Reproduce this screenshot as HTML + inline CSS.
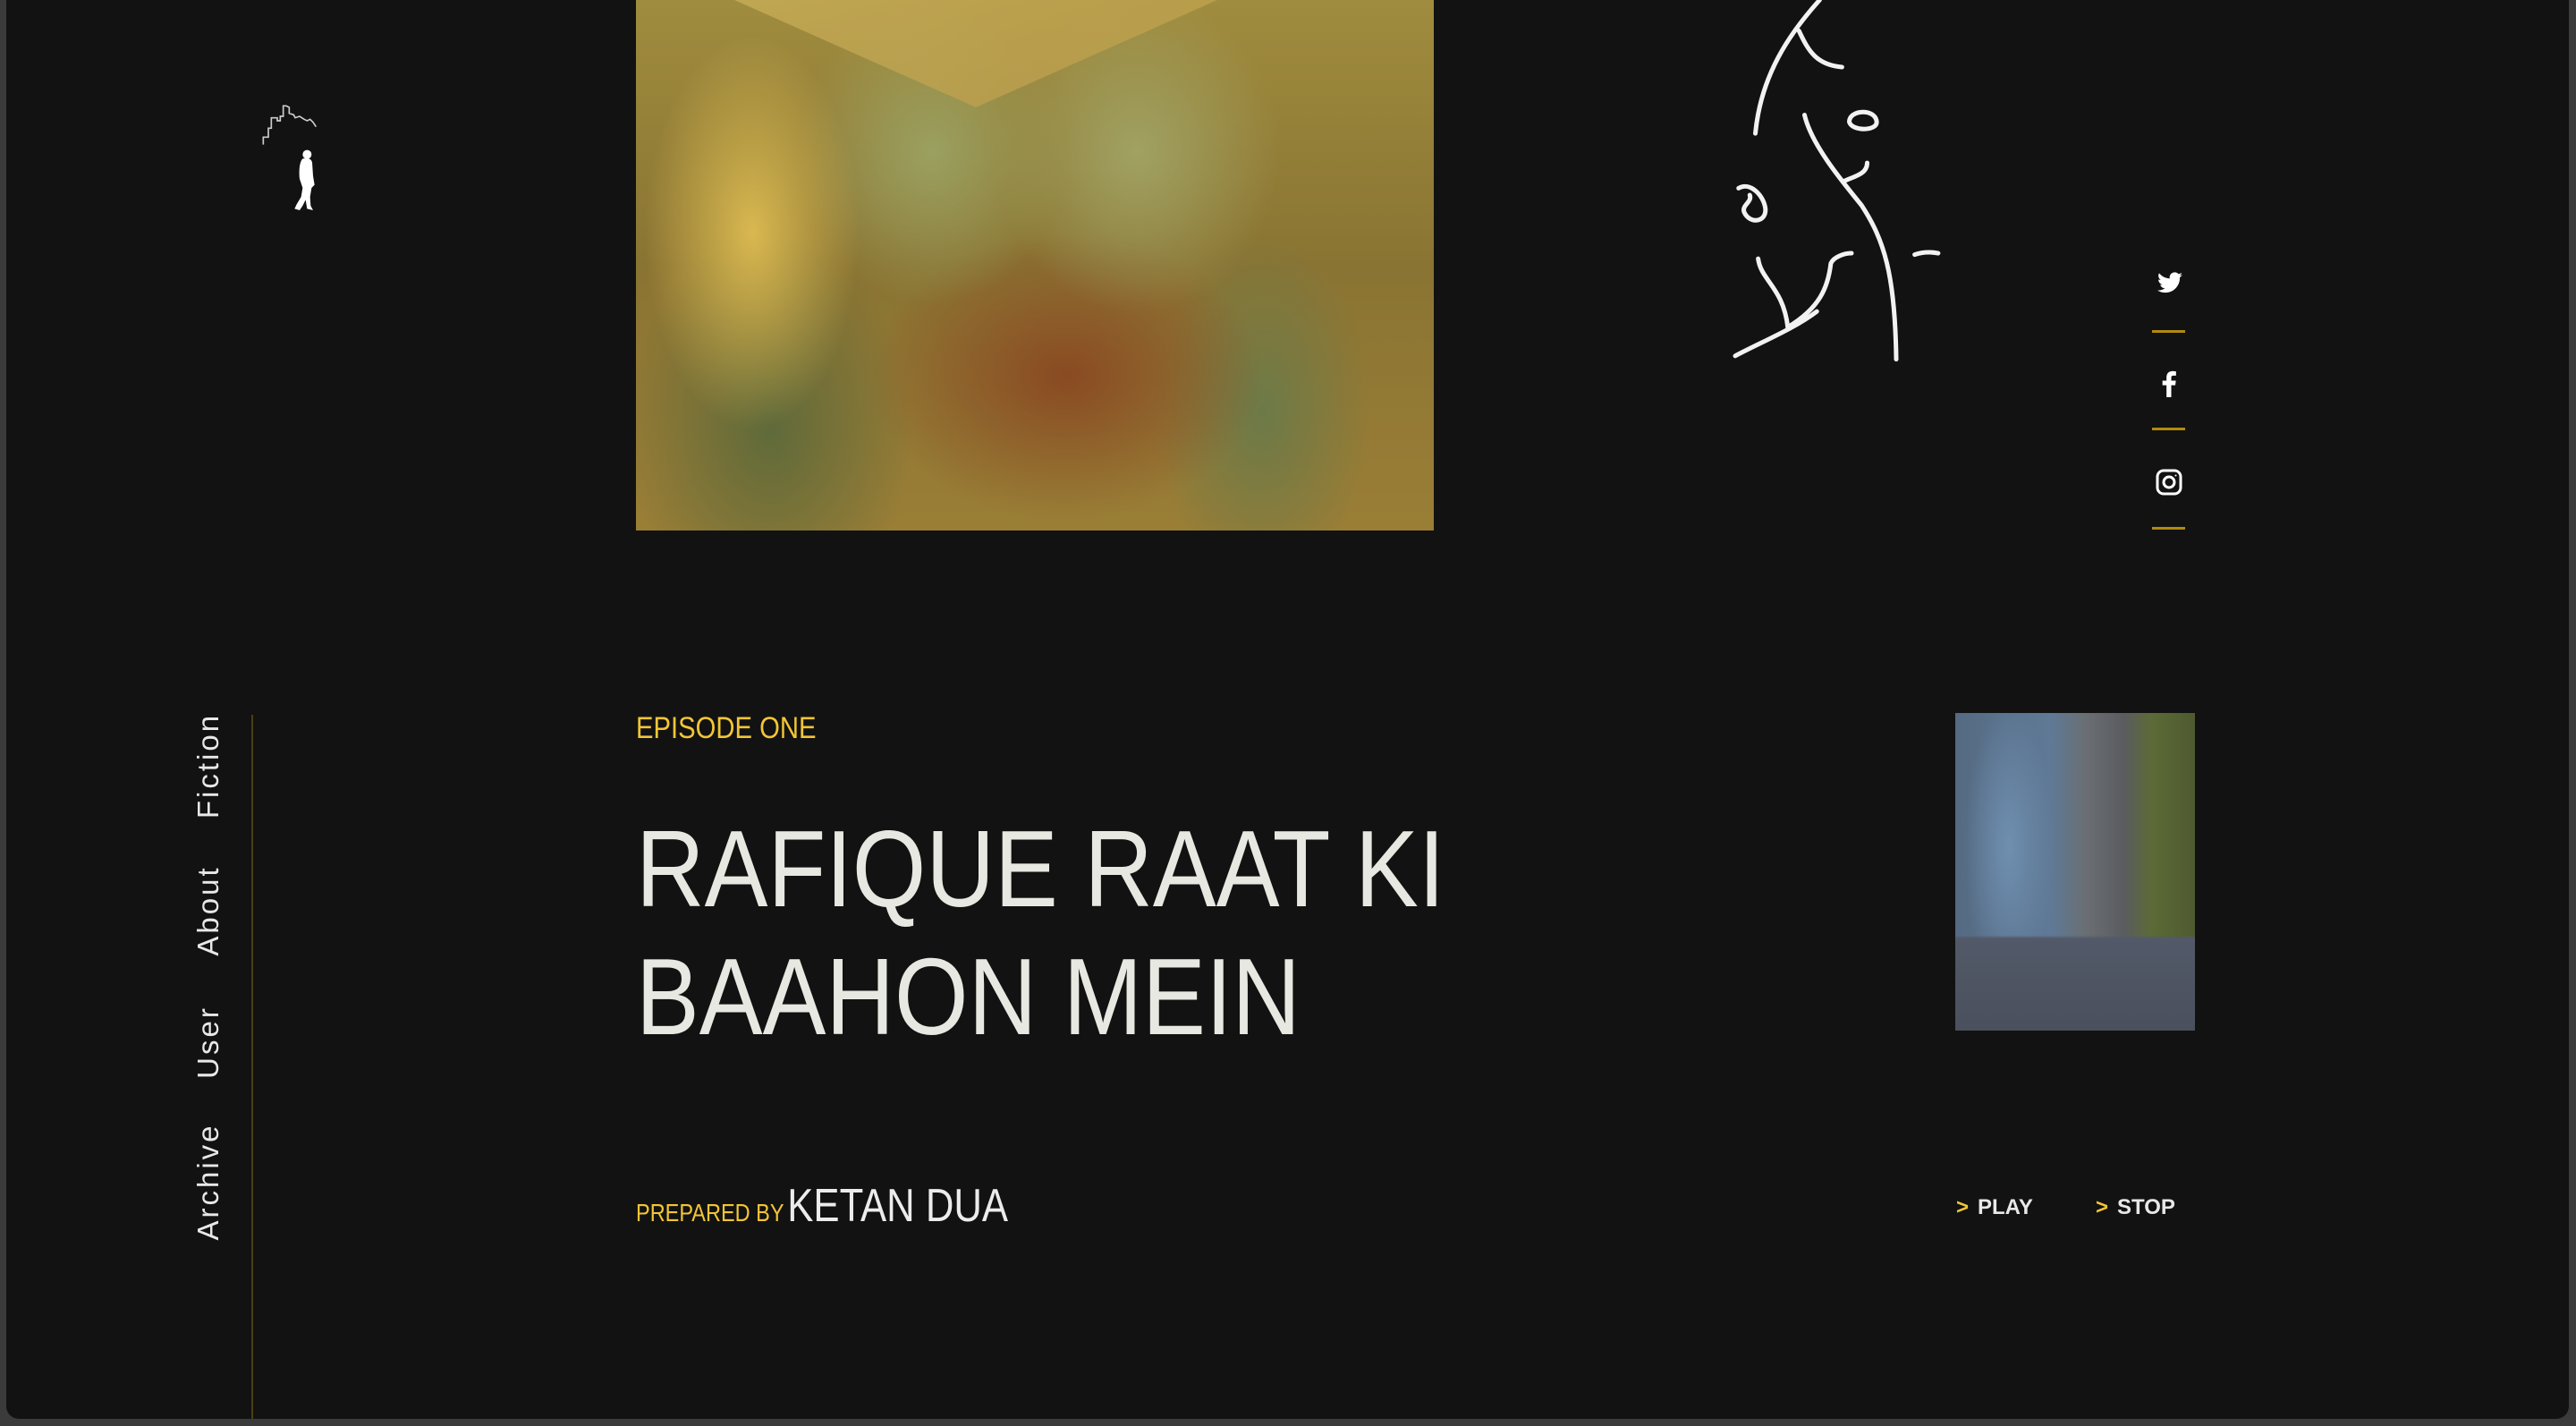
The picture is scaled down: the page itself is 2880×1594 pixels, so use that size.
<!DOCTYPE html>
<html><head><meta charset="utf-8"><style>
html,body{margin:0;padding:0;}
body{width:2880px;height:1594px;background:#3b3b3b;position:relative;overflow:hidden;font-family:"Liberation Sans",sans-serif;}
.win{position:absolute;left:7px;top:0;width:2865px;height:1586px;background:#121212;border-radius:0 0 14px 14px;overflow:hidden;}
.a{position:absolute;}
.main{left:704px;top:0;width:892px;height:593px;background:
radial-gradient(ellipse 120px 220px at 130px 260px,#d9b850 0%,rgba(217,184,80,0) 100%),
radial-gradient(ellipse 150px 170px at 330px 170px,#9aa060 0%,rgba(154,160,96,0) 100%),
radial-gradient(ellipse 160px 180px at 560px 170px,#a0a263 0%,rgba(160,162,99,0) 100%),
radial-gradient(ellipse 220px 160px at 480px 420px,#8a4a22 0%,rgba(138,74,34,0) 100%),
radial-gradient(ellipse 120px 200px at 700px 460px,#6c7a48 0%,rgba(108,122,72,0) 100%),
radial-gradient(ellipse 160px 220px at 150px 480px,#5f6a3a 0%,rgba(95,106,58,0) 100%),
linear-gradient(180deg,#a08c3e 0%,#8a7433 50%,#9a7e36 100%);}
.roof{left:110px;top:0;width:540px;height:120px;background:linear-gradient(160deg,#c7ad58,#b89a48);clip-path:polygon(0 0,100% 0,50% 100%);opacity:.8}
.thumb{left:2179px;top:797px;width:268px;height:355px;background:
linear-gradient(180deg,rgba(0,0,0,0) 0%,rgba(0,0,0,0) 70%,#525968 71%,#4a505c 100%),
radial-gradient(ellipse 50px 160px at 60px 150px,#6f8fb0 0%,rgba(111,143,176,0) 100%),
linear-gradient(90deg,#556a82 0%,#5f7996 40%,#6a6e72 55%,#5a5c60 70%,#5c6a36 82%,#4e5a30 100%);}
.nav{left:226px;color:#e8e8e8;font-size:33px;letter-spacing:3px;transform:translate(-50%,-50%) rotate(-90deg);white-space:nowrap;}
.vline{left:274px;top:799px;width:2px;height:800px;background:#4a3f12;}
.sl{left:2399px;width:37px;height:3px;background:#b08a10;}
.ep{left:704px;top:795px;color:#f2c536;font-size:34px;transform:scaleX(.86);transform-origin:left;white-space:nowrap;}
.title{left:704px;top:900px;color:#e8e8e2;font-size:122px;line-height:143px;transform:scaleX(.87);transform-origin:left top;white-space:nowrap;}
.prep{left:704px;top:1318px;white-space:nowrap;transform:scaleX(.84);transform-origin:left;}
.ctl{top:1336px;color:#e8e8e8;font-size:24px;font-weight:bold;white-space:nowrap;}
.ctl b{color:#f2c536;margin-right:10px;}
</style></head><body>
<div class="win">
<div class="a main"><div class="a roof"></div></div>
<svg class="a" style="left:263px;top:100px" width="110" height="150" viewBox="0 0 330 450">
<path d="M73 185 V160 H90 V130 H100 V95 H120 V105 H130 V90 H140 V55 H150 L160 60 V80 L175 85 L180 95 L195 90 L210 100 L220 105 L230 100 L240 110 L250 125" stroke="#ccc" stroke-width="5" fill="none"/>
<circle cx="220" cy="218" r="15" fill="#fff"/>
<path d="M205 232 C195 242 192 270 195 300 L205 330 L200 360 L185 385 L178 400 L195 405 L205 390 L215 370 L220 400 L240 405 L232 390 L230 360 L235 330 L245 320 L240 290 L237 245 C234 232 225 229 205 232 Z" fill="#fff"/>
</svg>
<svg class="a" style="left:1893px;top:0" width="300" height="420" viewBox="0 0 480 549" preserveAspectRatio="none" fill="none" stroke="#f2f2f2" stroke-width="5" stroke-linecap="round">
<g vector-effect="non-scaling-stroke">
<path vector-effect="non-scaling-stroke" d="M215 0 C160 50 110 110 100 195"/>
<path vector-effect="non-scaling-stroke" d="M178 45 C195 75 210 95 255 98"/>
<path vector-effect="non-scaling-stroke" d="M188 168 C200 210 250 260 290 300 C330 350 350 400 352 525"/>
<path vector-effect="non-scaling-stroke" d="M258 265 C275 258 300 255 300 238"/>
<path vector-effect="non-scaling-stroke" d="M268 178 C268 160 315 158 317 178 C318 192 272 192 268 178 Z"/>
<path vector-effect="non-scaling-stroke" d="M70 275 C90 265 115 285 118 305 C120 325 90 328 80 310 C75 300 95 295 90 285"/>
<path vector-effect="non-scaling-stroke" d="M105 378 C110 410 150 420 158 478"/>
<path vector-effect="non-scaling-stroke" d="M158 478 C215 450 230 420 235 385 C240 375 260 370 272 370"/>
<path vector-effect="non-scaling-stroke" d="M64 520 C110 500 170 480 210 455"/>
<path vector-effect="non-scaling-stroke" d="M385 372 C400 368 415 368 427 370"/>
</g>
</svg>
<svg class="a" style="left:2405px;top:303px" width="28" height="26" viewBox="0 0 24 20"><path fill="#fff" d="M24 2.4c-.9.4-1.8.7-2.8.8 1-.6 1.8-1.6 2.2-2.7-1 .6-2 1-3.1 1.2C19.3.7 18 0 16.6 0c-2.7 0-4.9 2.200-4.9 4.9 0 .4 0 .8.1 1.1C7.7 5.8 4.1 3.9 1.7.9c-.4.7-.7 1.6-.7 2.5 0 1.7.9 3.2 2.2 4.1-.8 0-1.6-.2-2.2-.6v.1c0 2.4 1.7 4.4 3.9 4.8-.4.1-.8.2-1.3.2-.3 0-.6 0-.9-.1.6 2 2.4 3.4 4.6 3.4-1.700 1.3-3.8 2.1-6.1 2.1-.4 0-.8 0-1.2-.1 2.2 1.4 4.8 2.2 7.5 2.2 9.1 0 14-7.5 14-14v-.6c1-.7 1.8-1.6 2.5-2.5z"/></svg>
<div class="a sl" style="top:369px"></div>
<svg class="a" style="left:2409px;top:414px" width="18" height="30" viewBox="0 0 10 18"><path fill="#fff" d="M6.5 18V10h2.7l.4-3.1H6.5V5c0-.9.3-1.5 1.5-1.5H9.7V.7C9.4.6 8.4.5 7.3.5 4.9.5 3.3 2 3.3 4.6v2.3H.6V10h2.7v8z"/></svg>
<div class="a sl" style="top:478px"></div>
<svg class="a" style="left:2403px;top:524px" width="30" height="30" viewBox="0 0 30 30" fill="none" stroke="#fff" stroke-width="3"><rect x="2" y="2" width="26" height="26" rx="7"/><circle cx="15" cy="15" r="6"/><circle cx="22.5" cy="7.5" r="1" fill="#fff" stroke="none"/></svg>
<div class="a sl" style="top:589px"></div>
<div class="a vline"></div>
<div class="a nav" style="top:856px">Fiction</div>
<div class="a nav" style="top:1018px">About</div>
<div class="a nav" style="top:1165px">User</div>
<div class="a nav" style="top:1321px">Archive</div>
<div class="a ep">EPISODE ONE</div>
<div class="a title">RAFIQUE RAAT KI<br>BAAHON MEIN</div>
<div class="a prep"><span style="color:#f2c536;font-size:28px">PREPARED BY</span> <span style="color:#ececec;font-size:52px">KETAN DUA</span></div>
<div class="a thumb"></div>
<div class="a ctl" style="left:2180px"><b>&gt;</b>PLAY</div>
<div class="a ctl" style="left:2336px"><b>&gt;</b>STOP</div>
</div>
</body></html>
